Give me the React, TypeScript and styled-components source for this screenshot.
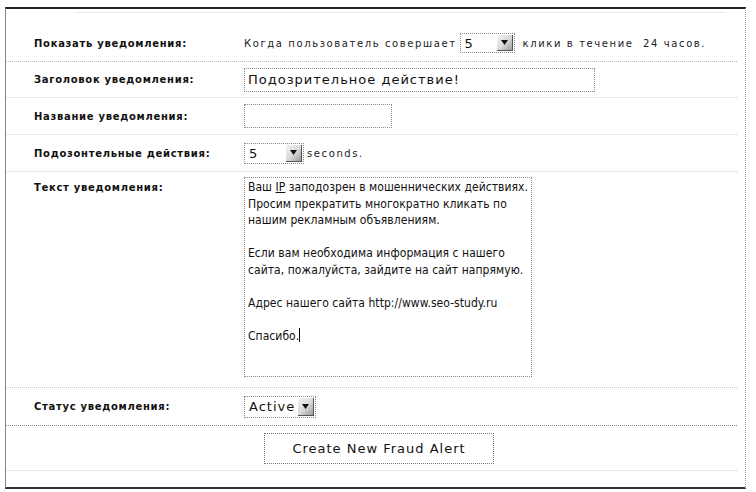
import React from "react";
import styled, { createGlobalStyle } from "styled-components";

const Global = createGlobalStyle`
  html, body { margin: 0; padding: 0; background: #fff; }
  body { font-family: "DejaVu Sans", Verdana, sans-serif; color: #111; }
`;

const Frame = styled.div`
  margin: 7px 0 0 5px;
  width: 741px;
  height: 482px;
  box-sizing: border-box;
  border-top: 2px solid #222;
  border-bottom: 2px solid #333;
  border-left: 1px solid #888;
  border-right: 1px dotted #999;
  padding: 16px 0 0 0;
  position: relative;
`;

const TopRule = styled.div`
  position: absolute;
  left: 70px;
  right: 20px;
  top: 3px;
  border-top: 1px dotted #d4d4d4;
`;

const Form = styled.div`
  display: flex;
  flex-direction: column;
  margin: 0 8px 0 0;
`;

const Row = styled.div<{ $h: number; $top?: boolean; $line?: string }>`
  display: grid;
  grid-template-columns: 210px 1fr;
  align-items: ${(p) => (p.$top ? "start" : "center")};
  height: ${(p) => p.$h}px;
  box-sizing: border-box;
  border-bottom: 1px dotted ${(p) => p.$line ?? "#bdbdbd"};
  padding-left: 28px;
`;

const Label = styled.div<{ $pt?: number }>`
  font-size: 10px;
  font-weight: bold;
  letter-spacing: 0.7px;
  color: #111;
  white-space: nowrap;
  padding-top: ${(p) => p.$pt ?? 0}px;
`;

const Value = styled.div<{ $pt?: number }>`
  display: flex;
  align-items: center;
  font-size: 10px;
  letter-spacing: 1.6px;
  color: #222;
  white-space: pre;
  padding-top: ${(p) => p.$pt ?? 0}px;
`;

const Gap = styled.span<{ $w: number }>`
  display: inline-block;
  width: ${(p) => p.$w}px;
`;

const Select = styled.div<{ $w: number; $h: number }>`
  display: flex;
  align-items: stretch;
  width: ${(p) => p.$w}px;
  height: ${(p) => p.$h}px;
  box-sizing: border-box;
  border: 1px dotted #8a8a8a;
  background: #fff;
  letter-spacing: 1px;
`;

const SelText = styled.div<{ $fs: number }>`
  flex: 1;
  display: flex;
  align-items: center;
  padding-left: 4px;
  font-size: ${(p) => p.$fs}px;
  color: #111;
`;

const Arrow = styled.div`
  width: 15px;
  margin: 1px;
  display: flex;
  align-items: center;
  justify-content: center;
  background: linear-gradient(135deg, #f4f4f4 0%, #d8d8d8 55%, #9a9a9a 100%);
  border-right: 1px solid #555;
  border-bottom: 1px solid #555;
`;

const Input = styled.div<{ $w: number }>`
  width: ${(p) => p.$w}px;
  height: 24px;
  box-sizing: border-box;
  border: 1px dotted #8a8a8a;
  padding-left: 3px;
  display: flex;
  align-items: center;
  font-size: 13px;
  letter-spacing: 1px;
  color: #111;
`;

const TextArea = styled.div`
  width: 288px;
  height: 200px;
  box-sizing: border-box;
  border: 1px dotted #8a8a8a;
  padding: 1px 3px;
  font-family: "DejaVu Sans Condensed", "DejaVu Sans", sans-serif;
  font-size: 12px;
  line-height: 16.6px;
  letter-spacing: 0.05px;
  color: #111;
  white-space: pre;
  overflow: hidden;
`;

const Line = styled.div`
  height: 16.6px;
`;

const Caret = styled.span`
  display: inline-block;
  width: 1px;
  height: 14px;
  background: #000;
  vertical-align: -2px;
`;

const Under = styled.span`
  text-decoration: underline;
`;

const ButtonRow = styled.div`
  height: 44px;
  display: flex;
  align-items: center;
  padding-left: 258px;
  border-bottom: 1px dotted #d0d0d0;
`;

const Button = styled.div`
  width: 230px;
  height: 31px;
  box-sizing: border-box;
  border: 1px dotted #777;
  display: flex;
  align-items: center;
  justify-content: center;
  font-size: 13px;
  letter-spacing: 1px;
  color: #111;
  background: #fff;
`;

const Tri = () => (
  <svg width="7" height="5" viewBox="0 0 7 5">
    <path d="M0 0 H7 L3.5 5 Z" fill="#111" />
  </svg>
);

const lines = [
  "Просим прекратить многократно кликать по",
  "нашим рекламным объявлениям.",
  "",
  "Если вам необходима информация с нашего",
  "сайта, пожалуйста, зайдите на сайт напрямую.",
  "",
  "Адрес нашего сайта http://www.seo-study.ru",
  "",
];

export default function App() {
  return (
    <>
      <Global />
      <Frame>
        <TopRule />
        <Form>
          <Row $h={37} $line="#b5b5b5">
            <Label>Показать уведомления:</Label>
            <Value>
              <span>Когда пользователь совершает</span>
              <Gap $w={3} />
              <Select $w={55} $h={20}>
                <SelText $fs={13}>5</SelText>
                <Arrow>
                  <Tri />
                </Arrow>
              </Select>
              <Gap $w={8} />
              <span>{"клики в течение  24 часов."}</span>
            </Value>
          </Row>
          <Row $h={36} $line="#d6d6d6">
            <Label>Заголовок уведомления:</Label>
            <Value>
              <Input $w={351}>Подозрительное действие!</Input>
            </Value>
          </Row>
          <Row $h={37} $line="#d6d6d6">
            <Label>Название уведомления:</Label>
            <Value>
              <Input $w={148} />
            </Value>
          </Row>
          <Row $h={37} $line="#cfcfcf">
            <Label>Подозонтельные действия:</Label>
            <Value>
              <Select $w={60} $h={21}>
                <SelText $fs={13}>5</SelText>
                <Arrow>
                  <Tri />
                </Arrow>
              </Select>
              <Gap $w={3} />
              <span>seconds.</span>
            </Value>
          </Row>
          <Row $h={216} $top $line="#c8c8c8">
            <Label $pt={10}>Текст уведомления:</Label>
            <Value $pt={5}>
              <TextArea>
                <Line>
                  <span>Ваш </span>
                  <Under>IP</Under>
                  <span> заподозрен в мошеннических действиях.</span>
                </Line>
                {lines.map((l, i) => (
                  <Line key={i}>{l}</Line>
                ))}
                <Line>
                  Спасибо.
                  <Caret />
                </Line>
              </TextArea>
            </Value>
          </Row>
          <Row $h={38} $line="#888">
            <Label>Статус уведомления:</Label>
            <Value>
              <Select $w={72} $h={22}>
                <SelText $fs={13}>Active</SelText>
                <Arrow>
                  <Tri />
                </Arrow>
              </Select>
            </Value>
          </Row>
          <ButtonRow>
            <Button>Create New Fraud Alert</Button>
          </ButtonRow>
        </Form>
      </Frame>
    </>
  );
}
